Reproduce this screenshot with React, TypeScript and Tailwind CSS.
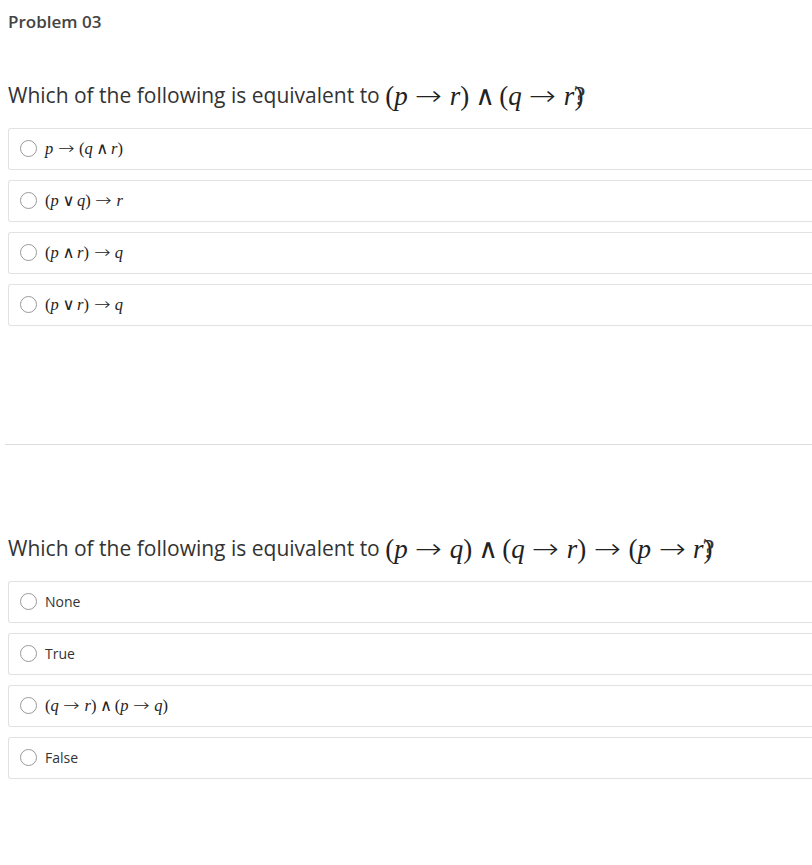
import React from 'react';

// tokens: [x] = italic variable, '>' arrow, '&' and, '|' or, other strings as is
type Tok = string | [string];

function Expr({ parts }: { parts: Tok[] }) {
  return (
    <span className="whitespace-nowrap font-['Liberation_Serif',serif] text-[#222]">
      {parts.map((p, i) => {
        if (Array.isArray(p)) return <span key={i} className="italic">{p[0]}</span>;
        if (p === '>')
          return (
            <span key={i} className="inline-block w-[1em] mx-[0.28em] text-center font-['DejaVu_Sans',sans-serif] font-light scale-x-[1.2]">
              →
            </span>
          );
        if (p === '&') return <span key={i} className="inline-block w-[0.67em] mx-[0.22em] text-center font-['DejaVu_Sans',sans-serif]">∧</span>;
        if (p === '|') return <span key={i} className="inline-block w-[0.67em] mx-[0.22em] text-center font-['DejaVu_Sans',sans-serif]">∨</span>;
        return <span key={i}>{p}</span>;
      })}
    </span>
  );
}

function Option({ children }: { children: React.ReactNode }) {
  return (
    <div className="ml-2 h-[42px] border border-r-0 border-[#e2e2e2] bg-white flex items-center pl-[11px] rounded-l-[3px]">
      <span className="w-[17px] h-[17px] rounded-full border-[1.5px] border-[#999] shrink-0 mr-[8px]" />
      <span className="text-[14px] text-[#333]">{children}</span>
    </div>
  );
}

export default function App() {
  const q1opts: Tok[][] = [
    [['p'], '>', '(', ['q'], '&', ['r'], ')'],
    ['(', ['p'], '|', ['q'], ')', '>', ['r']],
    ['(', ['p'], '&', ['r'], ')', '>', ['q']],
    ['(', ['p'], '|', ['r'], ')', '>', ['q']],
  ];

  return (
    <div className="w-[812px] min-h-[865px] bg-white overflow-hidden text-[#333] font-['Open_Sans','Noto_Sans',sans-serif]">
      <div className="pl-2 pt-[9px] text-[17px] font-semibold text-[#444]">Problem 03</div>

      <div className="pl-2 mt-[46px] text-[21px] text-[#333] flex items-center h-[30px]">
        <span>Which of the following is equivalent to&nbsp;</span>
        <span className="text-[27px]">
          <Expr parts={['(', ['p'], '>', ['r'], ')', '&', '(', ['q'], '>', ['r'], ')']} />
          <span className="-ml-[10px] font-['Liberation_Serif',serif]">?</span>
        </span>
      </div>

      <div className="mt-[17px] flex flex-col gap-[10px]">
        {q1opts.map((o, i) => (
          <Option key={i}>
            <span className="text-[16.5px]">
              <Expr parts={o} />
            </span>
          </Option>
        ))}
      </div>

      <div className="ml-[5px] mt-[118px] border-t border-[#dcdcdc]" />

      <div className="pl-2 mt-[89px] text-[21px] text-[#333] flex items-center h-[30px]">
        <span>Which of the following is equivalent to&nbsp;</span>
        <span className="text-[27px]">
          <Expr parts={['(', ['p'], '>', ['q'], ')', '&', '(', ['q'], '>', ['r'], ')', '>', '(', ['p'], '>', ['r'], ')']} />
          <span className="-ml-[10px] font-['Liberation_Serif',serif]">?</span>
        </span>
      </div>

      <div className="mt-[17px] flex flex-col gap-[10px]">
        <Option>None</Option>
        <Option>True</Option>
        <Option>
          <span className="text-[16.5px]">
            <Expr parts={['(', ['q'], '>', ['r'], ')', '&', '(', ['p'], '>', ['q'], ')']} />
          </span>
        </Option>
        <Option>False</Option>
      </div>
    </div>
  );
}
